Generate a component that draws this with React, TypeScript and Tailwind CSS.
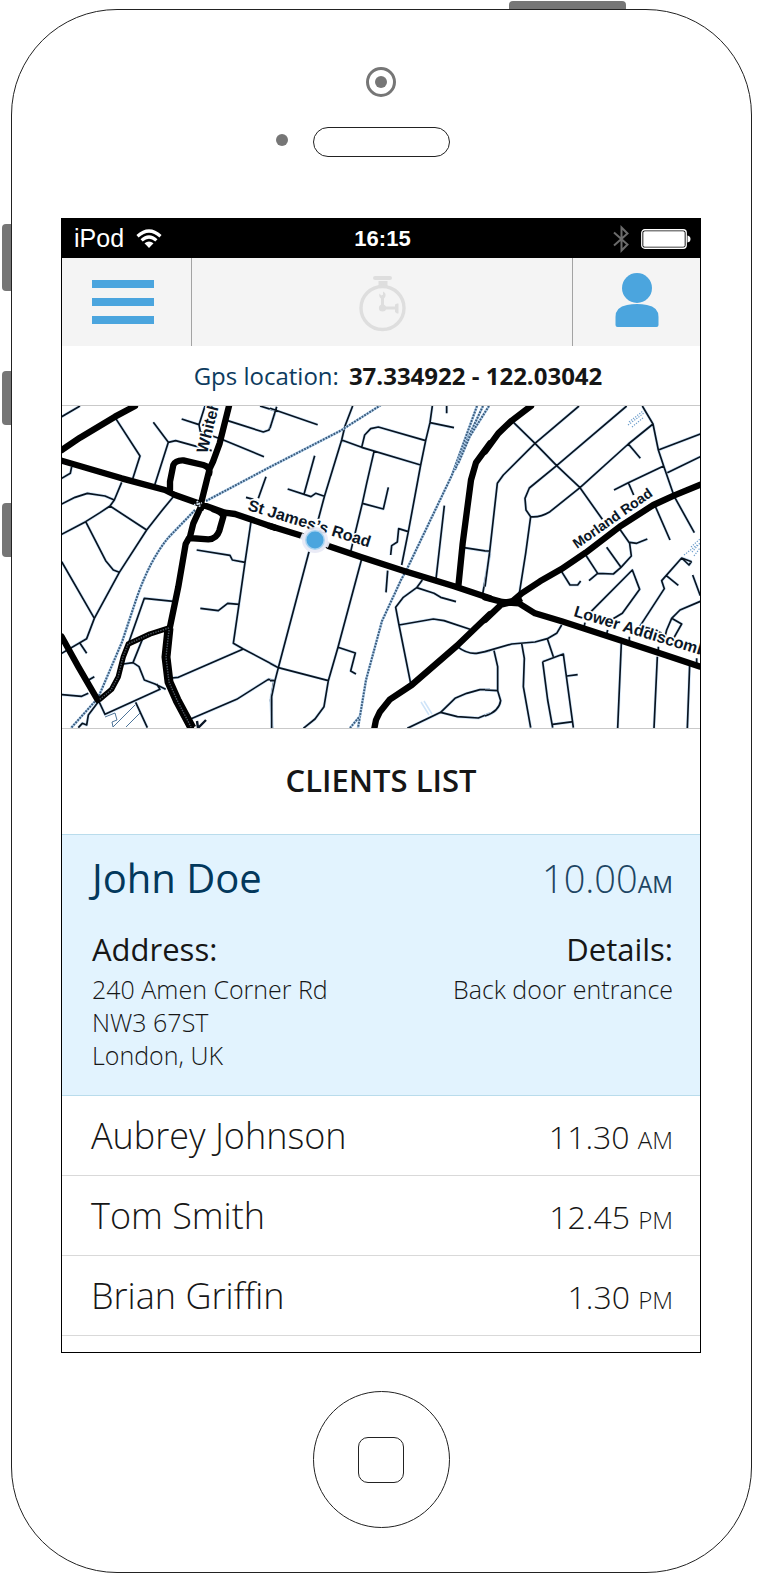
import React from "react";

type Tile = { x: number; y: number; thin: string; medium?: string; thick: string };

// Street geometry, drawn in three side-by-side tiles at a third of a pixel per unit.
const tiles: Tile[] = [
  {
    x: 55,
    y: 400,
    thin: `M20 50L75 18 M180 52L255 168L232 240 M295 67L340 127L297 262 M340 127L362 122L470 152
      M380 57L432 74L450 18 M432 74L436 95L500 118L627 170 M518 62L625 96L642 90L660 40 M615 18L660 32
      M50 200L46 220L20 235 M20 312L60 292L97 280L150 288L178 300 M200 247L178 300L165 318L135 338L92 365L20 403
      M165 318L275 390 M355 290L318 335L275 390L193 517L118 655L95 716L20 760
      M92 365L152 482L175 510L193 517 M20 485L118 655 M75 730L95 760 M20 884L80 889L100 880 M97 842L118 830
      M425 450L525 466L532 480L570 487 M436 625L490 632L518 610L552 613 M588 365L570 487L552 613L535 730L565 747L660 797
      M565 747L370 832L350 834 M405 958L545 898L640 838L660 842 M657 842L647 900L652 985
      M633 230L610 295 M573 292L595 298 M355 604L268 595L222 725 M262 718L234 788L205 792 M234 788L252 800L268 840L300 852L332 868
      M305 852L315 868L150 943L132 905 M242 907L277 983 M70 983L82 970L95 975L100 945L130 905`,
    medium: "M343 683L285 702L220 732L205 770L190 830L170 868L132 900",
    thick: `M20 150L75 113L180 50L240 18 M20 182L200 235L330 270L360 285L430 310L510 338L540 342L660 383
      M522 18L494 130L474 185L464 206L440 302L438 325 M345 270L345 245L355 195Q362 180 385 181L445 195Q468 202 462 222
      M438 320L415 370L404 414L460 418Q485 416 493 392L505 350Q503 338 475 328
      M402 414L392 432L370 560L343 690L335 770L342 850L365 900L408 985 M20 710L70 800L128 900`,
  },
  {
    x: 270,
    y: 400,
    thin: `M20 20L0 85 M0 25L143 74 M248 18L225 78L215 120L163 290L145 358 M215 120L275 142L452 195
      M275 142L284 105L302 86L325 81L467 122 M487 18L480 68L467 122L452 195L415 395L395 495 M480 68L552 83 M530 18V40
      M312 155L290 250L277 310L340 327L355 262 M277 310L242 455 M134 167L102 283 M53 267L123 290L137 280L163 289
      M415 395L386 386L382 426L365 437L362 465 M353 512L348 577 M523 317L498 537 M582 443L660 455 M660 460L638 582
      M117 455L25 803L15 842L5 890V985 M0 790L25 803L175 842 M0 842H15 M275 477L204 742L175 842L162 920L135 957L100 985
      M204 742L256 759L242 813L258 822 M457 540L440 563L400 592L377 622L387 675L422 850 M440 563L492 580L512 592L558 605
      M387 675L490 657L522 662L600 688 M562 740Q590 762 620 760L660 752 M412 985L512 937L555 895L590 880L630 869H660
      M512 937L562 950L625 954L660 940`,
    thick: `M0 378L95 407 M175 438L275 472L400 512L550 558L660 595 M565 560L578 430L603 240L618 188L660 130
      M660 642L560 738L425 855L360 898L330 935L318 960L313 985`,
  },
  {
    x: 485,
    y: 400,
    thin: `M80 62L150 130L215 197L285 263L352 358 M282 18L150 130L55 225L37 250L14 455L0 560 M0 453H14 M425 18L215 197L133 264L120 295L123 330L137 350
      M137 350Q165 353 195 335L285 263L430 132L504 72 M430 132L466 175 M472 18L504 72L520 150L536 198L568 290L628 398
      M520 150L646 102 M547 218L646 170 M387 270L430 248L536 198 M430 248L446 285 M510 317L555 420
      M137 350L122 460L103 580 M404 387L434 430L439 468L408 502L385 522L338 520L312 542 M434 427L455 430L487 417 M365 442L408 502
      M302 465L338 520 M228 512L255 555H278L287 543 M318 635L442 510L464 568L412 640L382 658 M620 485L590 474L530 542L538 566L464 680
      M544 527L580 556 M590 474L612 495L620 484 M623 525L646 587 M646 604L585 630L560 655L545 690L540 710 M560 655L590 672L564 718
      M300 668L296 686 M368 690L364 706 M433 710V728 M520 740V760 M635 775V795
      M0 755L80 732L150 726L187 716L215 700L230 675 M187 716L205 770 M173 785L235 762L265 983 M173 785L188 900L203 983 M203 973L265 965
      M246 828L278 824 M110 730L118 775L115 860L137 983 M27 752L38 800V872L47 902Q42 935 0 948 M0 870L38 872
      M409 730L398 985 M517 770L507 985 M614 795L607 985 M480 682L505 688L530 700`,
    thick: `M0 155L40 100L80 62L138 18 M0 592L52 606L102 610L150 640L230 664L410 722L520 758L646 800
      M646 254L568 286L505 315L404 380L302 458L228 508L165 544L110 580L80 606 M0 660L48 614L80 606`,
  },
];

const railways = [
  "M381 405L340 431L270 467L206 501",
  "M195 510L168 538Q150 560 137 597L122 642L98 698L71 728",
  "M477 406L452 475L407 569L401 580L382 621L366 680L358 728",
  "M483 406L467 440L455 470",
  "M489 406L470 436L458 464",
  "M350 728L360 716",
];

function CityMap() {
  return (
    <svg
      viewBox="62 406 638 322"
      role="img"
      aria-label="Map around St James's Road"
      className="block w-full bg-white"
      fill="none"
      strokeLinejoin="round"
    >
      {tiles.map((t) => (
        <g key={t.x} transform={`translate(${t.x} ${t.y}) scale(.33333)`}>
          <path d={t.thin} stroke="#cfe4f8" strokeWidth="9" />
          <path d={t.thin} stroke="#08131f" strokeWidth="5" />
        </g>
      ))}
      {railways.map((d) => (
        <g key={d}>
          <path d={d} stroke="#b4d2ee" strokeWidth="2.6" />
          <path d={d} stroke="#3a5a7a" strokeWidth="2" strokeDasharray="1.8 1.2" />
        </g>
      ))}
      <path d="M105 717l10-4 2 7-5 2 1 5M113 727l22-22M126 727l14-14" stroke="#4d7499" strokeWidth="1" />
      <path d="M421 702l8 13M424 701l8 13" stroke="#cfe4f8" strokeWidth="1.5" />
      <path d="M628 425l16-12M629 422l14-11M632 427l12-10M692 552l8-9M691 547l9-8M694 556l6-8M684 555l13-10" stroke="#6f9fcc" strokeWidth="1.2" strokeDasharray="1.3 1.3" />
      <g
        fill="#0a1626"
        stroke="#fff"
        strokeWidth="3"
        paintOrder="stroke"
        fontWeight="700"
        className="font-['Liberation_Sans',sans-serif]"
      >
        <text fontSize="16" transform="translate(207 454) rotate(-76)">Whiteh</text>
        <text fontSize="16" transform="translate(247 510) rotate(17)">St James’s Road</text>
        <text fontSize="14" transform="translate(577 549) rotate(-35)">Morland Road</text>
        <text fontSize="16" transform="translate(573 616) rotate(17)">Lower Addiscomb</text>
      </g>
      {tiles.map((t) => (
        <g key={t.x} transform={`translate(${t.x} ${t.y}) scale(.33333)`}>
          <path d={t.thick} stroke="#000" strokeWidth="19" strokeLinecap="round" />
          {t.medium && <path d={t.medium} stroke="#000" strokeWidth="16" />}
        </g>
      ))}
      <path d="M500 600l13-2 7-3 3 6-6 5-17 0z" fill="#000" />
      <path d="M169 628l-3 29 3 25 8 18 15 28" stroke="#000" strokeWidth="9" />
      <path d="M169 630l-3 27 3 25 8 18 14 27M169 628l-19 6-22 10-5 13-5 20-7 13-12 10" stroke="#4e5862" strokeWidth="1.4" strokeDasharray="1.4 1.2" />
      <path d="M197 501l3 6M194 505l8-2" stroke="#d5e4f2" strokeWidth="2" strokeDasharray="1.5 1" />
      <path d="M197 721l1 7M206 720l-8 8" stroke="#0a1626" strokeWidth="2.4" />
      <path d="M301 536l5 2M324 543l5 2" stroke="#dcdfe9" strokeWidth="6" />
      <circle cx="315" cy="540" r="13" fill="#e8e9f5" opacity=".9" />
      <circle cx="315" cy="540" r="10" fill="#a9d3f0" />
      <circle cx="315" cy="540" r="8.5" fill="#4ba5de" />
    </svg>
  );
}

function WifiIcon() {
  return (
    <svg width="26" height="20" viewBox="0 0 26 20" fill="none" stroke="#fff" strokeWidth="3.2" aria-hidden="true">
      <path d="M1.5 7.2Q13-3.2 24.5 7.2M5.6 11.4Q13 4.6 20.4 11.4" />
      <path d="M8.5 14.2Q13 10.6 17.5 14.2L13 19z" fill="#fff" stroke="none" />
    </svg>
  );
}

function BluetoothIcon() {
  return (
    <svg width="16" height="28" viewBox="0 0 16 28" fill="none" stroke="#6b6b6b" strokeWidth="2" aria-hidden="true">
      <path d="M1 7.5L14.5 19.5L8.5 25.5V2.5L14.5 8.5L1 20.5" />
    </svg>
  );
}

function BatteryIcon() {
  return (
    <svg width="50" height="20" viewBox="0 0 50 20" aria-hidden="true">
      <rect x=".75" y=".75" width="44.5" height="18.5" rx="3" fill="none" stroke="#fff" strokeWidth="1.3" />
      <rect x="2.3" y="2.3" width="41.4" height="15.4" rx="1.5" fill="#fff" />
      <path d="M46.500 6.500Q49.500 7 49.500 10T46.500 13.500z" fill="#fff" />
    </svg>
  );
}

function StopwatchIcon() {
  return (
    <svg width="48" height="56" viewBox="0 0 48 56" fill="#dedede" aria-hidden="true">
      <rect x="14" y="0" width="19" height="4" rx="2" />
      <rect x="19.500" y="5" width="9" height="6" />
      <circle cx="23.500" cy="32" r="21.500" fill="none" stroke="#dedede" strokeWidth="3.400" />
      <circle cx="23.500" cy="32" r="3.600" />
      <path d="M22 32V22.500Q19.500 20.500 20.500 17.500L22.200 19.500L24 18.800V15.500Q27.500 17 26.300 20.800L25 22.500V32z" />
      <path d="M24 30.500h12v-2l2-1h1.500v10H38l-2-1.500v-2.500H24z" />
    </svg>
  );
}

function UserIcon() {
  return (
    <svg width="44" height="56" viewBox="0 0 44 56" fill="#4ba5de" aria-hidden="true">
      <circle cx="22" cy="15" r="15" />
      <path d="M.5 52V44Q.5 34 12 32Q22 29.800 32 32Q43.500 34 43.500 44V52Q43.500 54 41.500 54H2.500Q.5 54 .5 52z" />
    </svg>
  );
}

const clients = [
  { name: "Aubrey Johnson", time: "11.30", half: "AM" },
  { name: "Tom Smith", time: "12.45", half: "PM" },
  { name: "Brian Griffin", time: "1.30", half: "PM" },
];

function Screen() {
  return (
    <main className="flex flex-col border border-black bg-white pb-[16px] text-[#161616]">
      <div className="grid h-[39px] grid-cols-3 items-center bg-black pr-[9px] pl-[12px] font-['Liberation_Sans',sans-serif] text-white">
        <div className="flex items-center gap-3">
          <span className="text-[25px] leading-none">iPod</span>
          <WifiIcon />
        </div>
        <span className="text-center text-[22px] leading-none font-bold">16:15</span>
        <div className="flex items-center justify-end gap-3">
          <BluetoothIcon />
          <BatteryIcon />
        </div>
      </div>

      <header className="flex h-[88px] items-stretch bg-[#f4f4f4]">
        <button type="button" aria-label="Menu" className="flex w-[130px] flex-col items-center justify-center gap-[10px] border-r border-[#a3a3a3] pr-2">
          <span className="h-2 w-[62px] bg-[#4ba5de]" />
          <span className="h-2 w-[62px] bg-[#4ba5de]" />
          <span className="h-2 w-[62px] bg-[#4ba5de]" />
        </button>
        <div className="flex flex-1 items-center justify-center pt-1 pl-[2px]">
          <StopwatchIcon />
        </div>
        <button type="button" aria-label="Profile" className="flex w-[128px] items-center justify-center border-l border-[#a3a3a3] pb-[2px]">
          <UserIcon />
        </button>
      </header>

      <p className="flex h-[60px] items-center justify-center gap-[10px] border-b border-[#c9c9c9] pl-[34px] text-[24px]">
        <span className="text-[#0d3b5e]">Gps location:</span>
        <strong className="font-bold">37.334922 - 122.03042</strong>
      </p>

      <CityMap />

      <h1 className="border-t border-[#c9c9c9] pt-[31px] pb-[33px] text-center text-[31px] leading-[41px] font-semibold">CLIENTS LIST</h1>

      <section className="border-y border-[#b9dcec] bg-[#e2f3fe] pt-[19px] pr-[27px] pb-[23px] pl-[30px]">
        <div className="flex items-baseline justify-between">
          <h2 className="text-[40px] leading-[48px] text-[#03385c]">John Doe</h2>
          <p className="text-[38px] leading-none font-light text-[#1d4563]">
            10.00<span className="text-[23px] leading-none font-normal">AM</span>
          </p>
        </div>
        <div className="mt-[27px] flex justify-between">
          <div>
            <h3 className="text-[31px] leading-[40px] font-medium">Address:</h3>
            <address className="mt-1 text-[25px] leading-[33px] font-light not-italic">
              240 Amen Corner Rd
              <br />
              NW3 67ST
              <br />
              London, UK
            </address>
          </div>
          <div className="text-right">
            <h3 className="text-[31px] leading-[40px] font-medium">Details:</h3>
            <p className="mt-1 text-[25px] leading-[33px] font-light">Back door entrance</p>
          </div>
        </div>
      </section>

      <ul>
        {clients.map((c) => (
          <li key={c.name} className="flex items-baseline justify-between border-b border-[#d9d9d9] py-[15px] pr-[27px] pl-[29px] font-light">
            <span className="text-[36px] leading-[49px]">{c.name}</span>
            <span className="text-[32px] leading-none">
              {c.time} <span className="text-[24px] leading-none">{c.half}</span>
            </span>
          </li>
        ))}
      </ul>
    </main>
  );
}

export default function App() {
  return (
    <div className="bg-white pt-[9px] pr-2 pb-[7px] pl-[11px] font-['Open_Sans',sans-serif]">
      <div className="relative rounded-[106px] border border-[#222] pr-[50px] pl-[49px]">
        <span className="absolute -top-[9px] right-[125px] h-2 w-[117px] rounded-t bg-[#767676]" />
        <span className="absolute top-[214px] -left-[10px] h-[67px] w-[9px] rounded-l bg-[#767676]" />
        <span className="absolute top-[361px] -left-[10px] h-[54px] w-[9px] rounded-l bg-[#767676]" />
        <span className="absolute top-[493px] -left-[10px] h-[54px] w-[9px] rounded-l bg-[#767676]" />

        <div className="flex h-[208px] flex-col items-center pt-[57px]">
          <div className="flex size-[30px] items-center justify-center rounded-full border-3 border-[#767676]">
            <span className="size-3 rounded-full bg-[#767676]" />
          </div>
          <div className="mt-[30px] flex items-start gap-[25px] pr-[37px]">
            <span className="mt-[7px] size-3 rounded-full bg-[#767676]" />
            <span className="h-[30px] w-[137px] rounded-full border border-[#222]" />
          </div>
        </div>

        <Screen />

        <div className="flex h-[219px] justify-center pt-[38px]">
          <button type="button" aria-label="Home" className="flex size-[137px] items-center justify-center rounded-full border border-[#222]">
            <span className="size-[46px] rounded-[10px] border border-[#222]" />
          </button>
        </div>
      </div>
    </div>
  );
}
